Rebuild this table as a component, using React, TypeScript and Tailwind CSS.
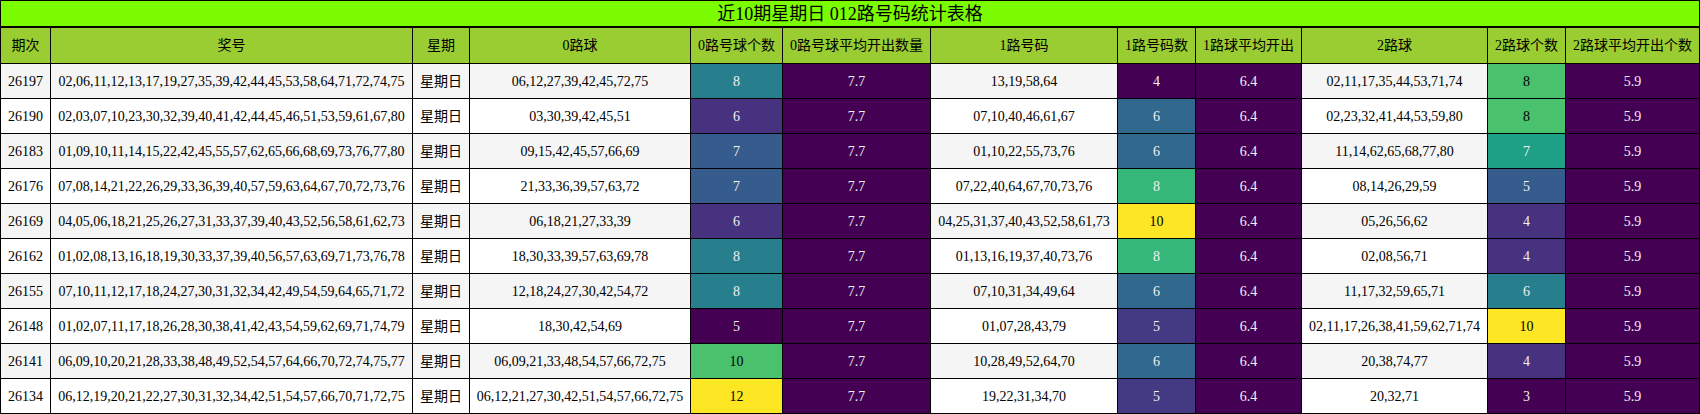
import React from "react";

const font = "font-['Liberation_Serif','Noto_Sans_CJK_SC',serif]";

const headers = [
  "期次",
  "奖号",
  "星期",
  "0路球",
  "0路号球个数",
  "0路号球平均开出数量",
  "1路号码",
  "1路号码数",
  "1路球平均开出",
  "2路球",
  "2路球个数",
  "2路球平均开出个数",
];

// viridis colours precomputed per value, same as pandas background_gradient
const zeroCount: Record<number, string> = {
  5: "bg-[#440154] text-[#f1f1f1]",
  6: "bg-[#46327e] text-[#f1f1f1]",
  7: "bg-[#365c8d] text-[#f1f1f1]",
  8: "bg-[#277f8e] text-[#f1f1f1]",
  10: "bg-[#4ac16d] text-black",
  12: "bg-[#fde725] text-black",
};
const oneCount: Record<number, string> = {
  4: "bg-[#440154] text-[#f1f1f1]",
  5: "bg-[#443983] text-[#f1f1f1]",
  6: "bg-[#31688e] text-[#f1f1f1]",
  8: "bg-[#35b779] text-[#f1f1f1]",
  10: "bg-[#fde725] text-black",
};
const twoCount: Record<number, string> = {
  3: "bg-[#440154] text-[#f1f1f1]",
  4: "bg-[#46327e] text-[#f1f1f1]",
  5: "bg-[#365c8d] text-[#f1f1f1]",
  6: "bg-[#277f8e] text-[#f1f1f1]",
  7: "bg-[#1fa187] text-[#f1f1f1]",
  8: "bg-[#4ac16d] text-black",
  10: "bg-[#fde725] text-black",
};
const avg = "bg-[#440154] text-[#f1f1f1]";

type Row = [string, string, string, number, string, number, string, number];

const rows: Row[] = [
  ["26197", "02,06,11,12,13,17,19,27,35,39,42,44,45,53,58,64,71,72,74,75", "06,12,27,39,42,45,72,75", 8, "13,19,58,64", 4, "02,11,17,35,44,53,71,74", 8],
  ["26190", "02,03,07,10,23,30,32,39,40,41,42,44,45,46,51,53,59,61,67,80", "03,30,39,42,45,51", 6, "07,10,40,46,61,67", 6, "02,23,32,41,44,53,59,80", 8],
  ["26183", "01,09,10,11,14,15,22,42,45,55,57,62,65,66,68,69,73,76,77,80", "09,15,42,45,57,66,69", 7, "01,10,22,55,73,76", 6, "11,14,62,65,68,77,80", 7],
  ["26176", "07,08,14,21,22,26,29,33,36,39,40,57,59,63,64,67,70,72,73,76", "21,33,36,39,57,63,72", 7, "07,22,40,64,67,70,73,76", 8, "08,14,26,29,59", 5],
  ["26169", "04,05,06,18,21,25,26,27,31,33,37,39,40,43,52,56,58,61,62,73", "06,18,21,27,33,39", 6, "04,25,31,37,40,43,52,58,61,73", 10, "05,26,56,62", 4],
  ["26162", "01,02,08,13,16,18,19,30,33,37,39,40,56,57,63,69,71,73,76,78", "18,30,33,39,57,63,69,78", 8, "01,13,16,19,37,40,73,76", 8, "02,08,56,71", 4],
  ["26155", "07,10,11,12,17,18,24,27,30,31,32,34,42,49,54,59,64,65,71,72", "12,18,24,27,30,42,54,72", 8, "07,10,31,34,49,64", 6, "11,17,32,59,65,71", 6],
  ["26148", "01,02,07,11,17,18,26,28,30,38,41,42,43,54,59,62,69,71,74,79", "18,30,42,54,69", 5, "01,07,28,43,79", 5, "02,11,17,26,38,41,59,62,71,74", 10],
  ["26141", "06,09,10,20,21,28,33,38,48,49,52,54,57,64,66,70,72,74,75,77", "06,09,21,33,48,54,57,66,72,75", 10, "10,28,49,52,64,70", 6, "20,38,74,77", 4],
  ["26134", "06,12,19,20,21,22,27,30,31,32,34,42,51,54,57,66,70,71,72,75", "06,12,21,27,30,42,51,54,57,66,72,75", 12, "19,22,31,34,70", 5, "20,32,71", 3],
];

const cell = "flex items-center justify-center border-r border-b border-black whitespace-nowrap";

export default function App() {
  return (
    <div className={`w-[1700px] text-[14px] text-black ${font}`}>
      <div className="h-[27px] border border-black bg-[#7cfc00] flex items-center justify-center text-[18px] leading-none">
        近10期星期日 012路号码统计表格
      </div>
      <div className="grid grid-cols-[50px_362px_57px_221px_92px_148px_187px_78px_106px_186px_78px_134px] grid-rows-[36px_repeat(10,35px)] border-l border-t border-black">
        {headers.map((h) => (
          <div key={h} className={`${cell} bg-[#9acd32]`}>
            {h}
          </div>
        ))}
        {rows.map((r, i) => {
          const base = i % 2 === 0 ? "bg-[#f5f5f5]" : "bg-white";
          return (
            <React.Fragment key={r[0]}>
              <div className={`${cell} ${base}`}>{r[0]}</div>
              <div className={`${cell} ${base}`}>{r[1]}</div>
              <div className={`${cell} ${base}`}>星期日</div>
              <div className={`${cell} ${base}`}>{r[2]}</div>
              <div className={`${cell} ${zeroCount[r[3]]}`}>{r[3]}</div>
              <div className={`${cell} ${avg}`}>7.7</div>
              <div className={`${cell} ${base}`}>{r[4]}</div>
              <div className={`${cell} ${oneCount[r[5]]}`}>{r[5]}</div>
              <div className={`${cell} ${avg}`}>6.4</div>
              <div className={`${cell} ${base}`}>{r[6]}</div>
              <div className={`${cell} ${twoCount[r[7]]}`}>{r[7]}</div>
              <div className={`${cell} ${avg}`}>5.9</div>
            </React.Fragment>
          );
        })}
      </div>
    </div>
  );
}
